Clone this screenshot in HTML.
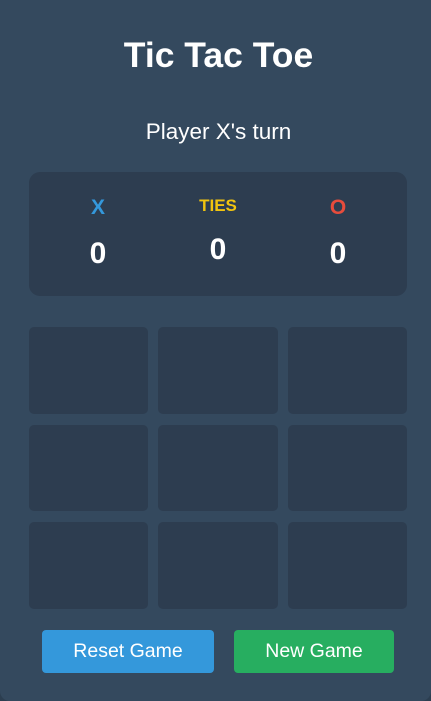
<!DOCTYPE html>
<html><head><style>
*{margin:0;padding:0;box-sizing:border-box}
body{width:431px;height:701px;background:#2c3e50;font-family:"Liberation Sans",Arial,sans-serif;overflow:hidden}
.c{position:absolute;left:0;top:0;width:431px;height:701px;background:#34495e;border-radius:0 0 10px 10px;color:#fff}
.a{position:absolute}
h1{position:absolute;left:0;width:437px;top:35px;text-align:center;font-size:35.5px;font-weight:bold}
.t{position:absolute;left:0;width:437px;top:119px;text-align:center;font-size:22.5px}
.s{left:29px;top:172px;width:378px;height:124px;background:#2d3d50;border-radius:11px}
.l{position:absolute;width:120px;text-align:center;font-weight:bold}
.cell{position:absolute;background:#2d3d50;border-radius:5px}
.b{position:absolute;top:630px;height:43px;border-radius:4px;font-size:19.5px;text-align:center;line-height:42px;color:#fff}
</style></head><body><div class="c">
<h1>Tic Tac Toe</h1>
<div class="t">Player X's turn</div>
<div class="a s"></div>
<div class="l" style="left:38px;top:196px;font-size:21px;color:#3498db">X</div>
<div class="l" style="left:38px;top:237px;font-size:30px">0</div>
<div class="l" style="left:158px;top:196px;font-size:17px;color:#f1c40f">TIES</div>
<div class="l" style="left:158px;top:233px;font-size:30px">0</div>
<div class="l" style="left:278px;top:196px;font-size:21px;color:#e74c3c">O</div>
<div class="l" style="left:278px;top:237px;font-size:30px">0</div>
<div class="cell" style="left:29px;top:327px;width:119px;height:87px"></div>
<div class="cell" style="left:158px;top:327px;width:120px;height:87px"></div>
<div class="cell" style="left:288px;top:327px;width:119px;height:87px"></div>
<div class="cell" style="left:29px;top:425px;width:119px;height:86px"></div>
<div class="cell" style="left:158px;top:425px;width:120px;height:86px"></div>
<div class="cell" style="left:288px;top:425px;width:119px;height:86px"></div>
<div class="cell" style="left:29px;top:522px;width:119px;height:87px"></div>
<div class="cell" style="left:158px;top:522px;width:120px;height:87px"></div>
<div class="cell" style="left:288px;top:522px;width:119px;height:87px"></div>
<div class="b" style="left:42px;width:172px;background:#3498db">Reset Game</div>
<div class="b" style="left:234px;width:160px;background:#27ae60">New Game</div>
</div></body></html>
